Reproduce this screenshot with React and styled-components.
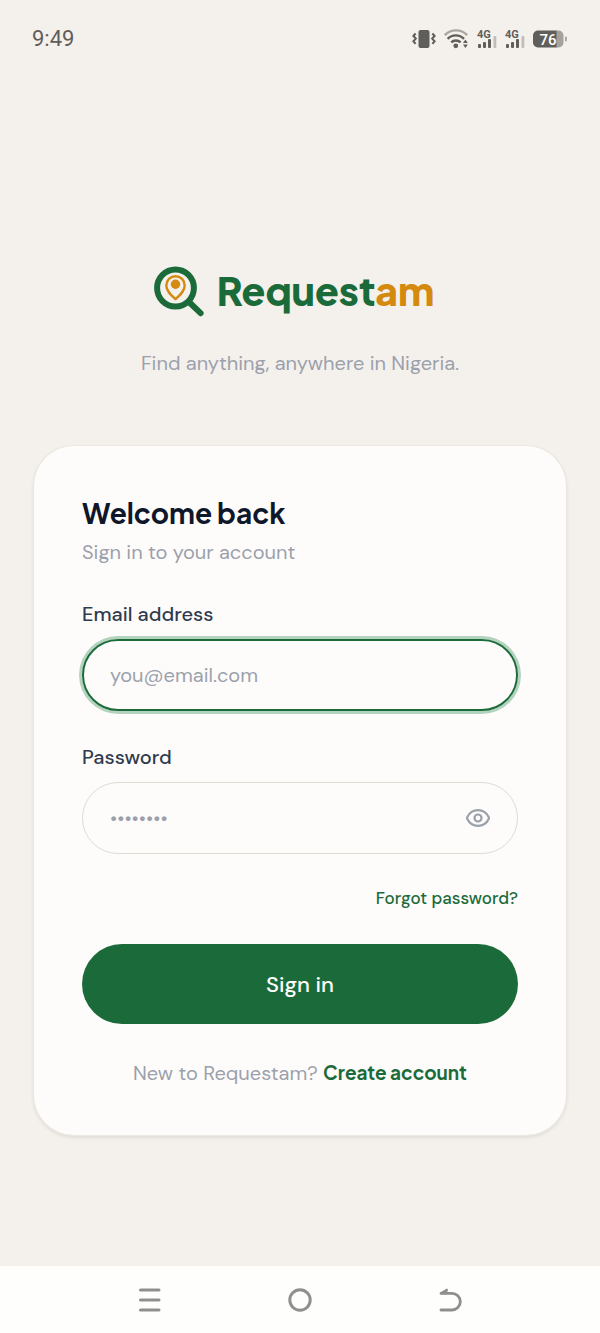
import React, { useState } from 'react';
import styled, { createGlobalStyle } from 'styled-components';

const GlobalStyle = createGlobalStyle`
  :root {
    --bg: #f4f0ec;
    --bg-card: #fefcfb;
    --green: #1b6b3a;
    --amber: #d4890f;
    --ink: #0f172a;
    --label: #2f3b4e;
    --muted: #9ba1ac;
    --border: #dedbd3;
    --system: #5f5e5a;
    --font-body: 'DM Sans', Inter, sans-serif;
    --font-display: 'Plus Jakarta Sans', Inter, sans-serif;
  }

  * {
    box-sizing: border-box;
  }

  body {
    margin: 0;
    background: var(--bg);
    color: var(--ink);
    font-family: var(--font-body);
    font-size: 20px;
    line-height: 28px;
  }
`;

const Page = styled.div`
  min-height: 100vh;
  display: flex;
  flex-direction: column;
`;

const StatusBar = styled.header`
  display: flex;
  align-items: center;
  justify-content: space-between;
  height: 78px;
  padding: 0 33px 0 32px;
  color: var(--system);
`;

const Clock = styled.time`
  font-family: Roboto, sans-serif;
  font-size: 22px;
`;

const StatusIcons = styled.div`
  display: flex;
  align-items: center;
  gap: 8px;

  svg {
    display: block;
  }
`;

const Main = styled.main`
  flex: 1;
  display: flex;
  flex-direction: column;
  align-items: center;
  padding: 186px 34px 124px;
`;

const Brand = styled.div`
  display: flex;
  align-items: center;
  gap: 12px;
  margin-right: 12px;
`;

const BrandName = styled.span`
  font-family: var(--font-display);
  font-size: 39px;
  line-height: 54px;
  font-weight: 800;
  color: var(--green);

  em {
    font-style: normal;
    color: var(--amber);
  }
`;

const Tagline = styled.p`
  margin: 31px 0 69px;
  color: var(--muted);
`;

const Card = styled.section`
  width: 100%;
  padding: 48px;
  background: var(--bg-card);
  border-radius: 40px;
  box-shadow: 0 0 0 1px #ece8e2, 0 2px 4px rgba(60, 50, 30, 0.14);
`;

const Title = styled.h1`
  margin: 0 0 6px;
  font-family: var(--font-display);
  font-size: 28px;
  line-height: 38px;
  font-weight: 700;
`;

const Subtitle = styled.p`
  margin: 0 0 34px;
  color: var(--muted);
`;

const Field = styled.div`
  display: flex;
  flex-direction: column;
  gap: 11px;
  margin-bottom: 32px;
`;

const Label = styled.label`
  color: var(--label);
  font-weight: 500;
`;

const InputBox = styled.div`
  display: flex;
  align-items: center;
  height: 72px;
  padding: ${props => props.$active ? '0 25px 0 26px' : '0 26px 0 27px'};
  border: ${props => props.$active ? '2px solid var(--green)' : '1px solid var(--border)'};
  border-radius: 36px;
  box-shadow: ${props => props.$active ? '0 0 0 3px #b3d3be' : 'none'};
`;

const Input = styled.input`
  flex: 1;
  min-width: 0;
  padding: 0;
  border: none;
  outline: none;
  background: transparent;
  color: var(--ink);
  font-family: inherit;
  font-size: 20px;
  line-height: 28px;

  &::placeholder {
    color: var(--muted);
    opacity: 1;
  }
`;

const EyeButton = styled.button`
  display: flex;
  padding: 0;
  border: none;
  background: none;
  color: var(--muted);
  cursor: pointer;
`;

const ForgotRow = styled.div`
  display: flex;
  justify-content: flex-end;
  margin-bottom: 34px;
`;

const ForgotLink = styled.a`
  color: var(--green);
  font-size: 17px;
  line-height: 24px;
  font-weight: 500;
  text-decoration: none;
`;

const SubmitButton = styled.button`
  display: block;
  width: 100%;
  height: 80px;
  border: none;
  border-radius: 40px;
  background: var(--green);
  color: white;
  font-family: inherit;
  font-size: 22px;
  font-weight: 500;
  cursor: pointer;
`;

const SignupText = styled.p`
  margin: 34px 0 0;
  text-align: center;
  color: var(--muted);

  a {
    font-family: var(--font-display);
    font-size: 19px;
    font-weight: 700;
    color: var(--green);
    text-decoration: none;
  }
`;

const SystemNav = styled.nav`
  display: flex;
  height: 67px;
  padding: 0 12.5%;
  background: #fefefd;
`;

const SystemButton = styled.button`
  flex: 1;
  display: flex;
  align-items: center;
  justify-content: center;
  padding: 0;
  border: none;
  background: none;
  color: #8f8f8d;
`;

const VibrateIcon = () => (
  <svg width="24" height="20" viewBox="0 0 24 20" fill="none" stroke="currentColor" strokeWidth="2">
    <rect x="6.5" y="1" width="11" height="18" rx="2" fill="currentColor" stroke="none" />
    <path d="M3.6 4.5 1.4 7l2.4 2.6-2.4 2.6 2.2 2.6M20.4 4.5 22.6 7l-2.4 2.6 2.4 2.6-2.2 2.6" />
  </svg>
);

const WifiIcon = () => (
  <svg width="25" height="20" viewBox="0 0 25 20" fill="none" stroke="currentColor" strokeWidth="2.4">
    <path d="M.8 6.200C7-.2 17-.2 23.200 6.200" opacity=".5" />
    <path d="M3.600 9.800c4.400-4.600 12-4.600 16.400 0M7.200 13.400c2.600-2.600 6.800-2.600 9.400 0" />
    <circle cx="11.800" cy="16.800" r="2.400" fill="currentColor" stroke="none" />
    <path d="m21.400 10.600 2.400 3.400H19zM21.400 19l2.400-3.400H19z" fill="currentColor" stroke="none" />
  </svg>
);

const SignalIcon = () => (
  <svg width="20" height="24" viewBox="0 0 20 24" fill="currentColor">
    <text x="0" y="11" fontFamily="Roboto, sans-serif" fontSize="11" fontWeight="700">4G</text>
    <rect x="1" y="17" width="3" height="4" rx="1" />
    <rect x="6" y="15" width="3" height="6" rx="1" />
    <rect x="11" y="12" width="3" height="9" rx="1" />
    <rect x="16.5" y="9" width="2.800" height="12" rx="1" opacity=".35" />
  </svg>
);

const BatteryIcon = () => (
  <svg width="34" height="20" viewBox="0 0 34 20">
    <path d="M23 1.500h2.500a5 5 0 0 1 5 5v7a5 5 0 0 1-5 5H23z" fill="#a3a29f" />
    <path d="M5 1.500h18.500v17H5a5 5 0 0 1-5-5v-7a5 5 0 0 1 5-5z" fill="currentColor" />
    <rect x="32" y="7.500" width="1.800" height="5" rx=".9" fill="#a3a29f" />
    <text x="15" y="15.500" textAnchor="middle" fill="#fff" fontFamily="Roboto, sans-serif" fontSize="15" fontWeight="500">76</text>
  </svg>
);

const LogoMark = () => (
  <svg width="51" height="52" viewBox="0 0 51 52" fill="none">
    <path d="m35 37 11.600 11.200" stroke="#1b6b3a" strokeWidth="6" strokeLinecap="round" />
    <circle cx="21.500" cy="23" r="18.400" stroke="#1b6b3a" strokeWidth="6" />
    <path
      d="M21.500 34.200C17 30 12.300 26 12.300 20.400a9.200 9.200 0 0 1 18.400 0c0 5.600-4.700 9.600-9.200 13.800z"
      stroke="#d4890f"
      strokeWidth="2.400"
      strokeLinejoin="round"
    />
    <circle cx="21.500" cy="19.300" r="4.700" fill="#d4890f" />
  </svg>
);

const EyeIcon = () => (
  <svg width="26" height="26" viewBox="0 0 26 26" fill="none" stroke="currentColor" strokeWidth="2.200">
    <path d="M2.200 13.700a1.700 1.700 0 0 1 0-1.400C4.300 7.900 8.400 5.200 13 5.200s8.700 2.700 10.800 7.100a1.700 1.700 0 0 1 0 1.400c-2.100 4.400-6.200 7.100-10.800 7.100S4.300 18.100 2.200 13.700z" />
    <circle cx="13" cy="13" r="3.500" />
  </svg>
);

const App = () => {
  const [activeField, setActiveField] = useState('email');
  const [showPassword, setShowPassword] = useState(false);

  return (
    <>
      <GlobalStyle />
      <Page>
        <StatusBar>
          <Clock>9:49</Clock>
          <StatusIcons>
            <VibrateIcon />
            <WifiIcon />
            <SignalIcon />
            <SignalIcon />
            <BatteryIcon />
          </StatusIcons>
        </StatusBar>

        <Main>
          <Brand>
            <LogoMark />
            <BrandName>Request<em>am</em></BrandName>
          </Brand>
          <Tagline>Find anything, anywhere in Nigeria.</Tagline>

          <Card>
            <Title>Welcome back</Title>
            <Subtitle>Sign in to your account</Subtitle>

            <form onSubmit={e => e.preventDefault()}>
              <Field>
                <Label htmlFor="email">Email address</Label>
                <InputBox $active={activeField === 'email'}>
                  <Input
                    id="email"
                    type="email"
                    placeholder="you@email.com"
                    onFocus={() => setActiveField('email')}
                  />
                </InputBox>
              </Field>

              <Field>
                <Label htmlFor="password">Password</Label>
                <InputBox $active={activeField === 'password'}>
                  <Input
                    id="password"
                    type={showPassword ? 'text' : 'password'}
                    placeholder="••••••••"
                    onFocus={() => setActiveField('password')}
                  />
                  <EyeButton
                    type="button"
                    aria-label="Show password"
                    onClick={() => setShowPassword(!showPassword)}
                  >
                    <EyeIcon />
                  </EyeButton>
                </InputBox>
              </Field>

              <ForgotRow>
                <ForgotLink href="#forgot">Forgot password?</ForgotLink>
              </ForgotRow>

              <SubmitButton type="submit">Sign in</SubmitButton>
            </form>

            <SignupText>
              New to Requestam? <a href="#register">Create account</a>
            </SignupText>
          </Card>
        </Main>

        <SystemNav>
          <SystemButton aria-label="Recent apps">
            <svg width="24" height="26" viewBox="0 0 24 26" stroke="currentColor" strokeWidth="3" strokeLinecap="round">
              <path d="M2.500 3h18.500M2.500 13h18.500M2.500 23h18.500" />
            </svg>
          </SystemButton>
          <SystemButton aria-label="Home">
            <svg width="24" height="24" viewBox="0 0 24 24" fill="none" stroke="currentColor" strokeWidth="3">
              <circle cx="12" cy="12" r="10.200" />
            </svg>
          </SystemButton>
          <SystemButton aria-label="Back">
            <svg width="24" height="26" viewBox="0 0 24 26" fill="none" stroke="currentColor" strokeWidth="2.800" strokeLinecap="round" strokeLinejoin="round">
              <path d="M3 6.400h11a8.300 8.300 0 0 1 0 16.600H3" />
              <path d="M9 2.600 3 6.200h5z" fill="currentColor" strokeWidth="2" />
            </svg>
          </SystemButton>
        </SystemNav>
      </Page>
    </>
  );
};

export default App;
